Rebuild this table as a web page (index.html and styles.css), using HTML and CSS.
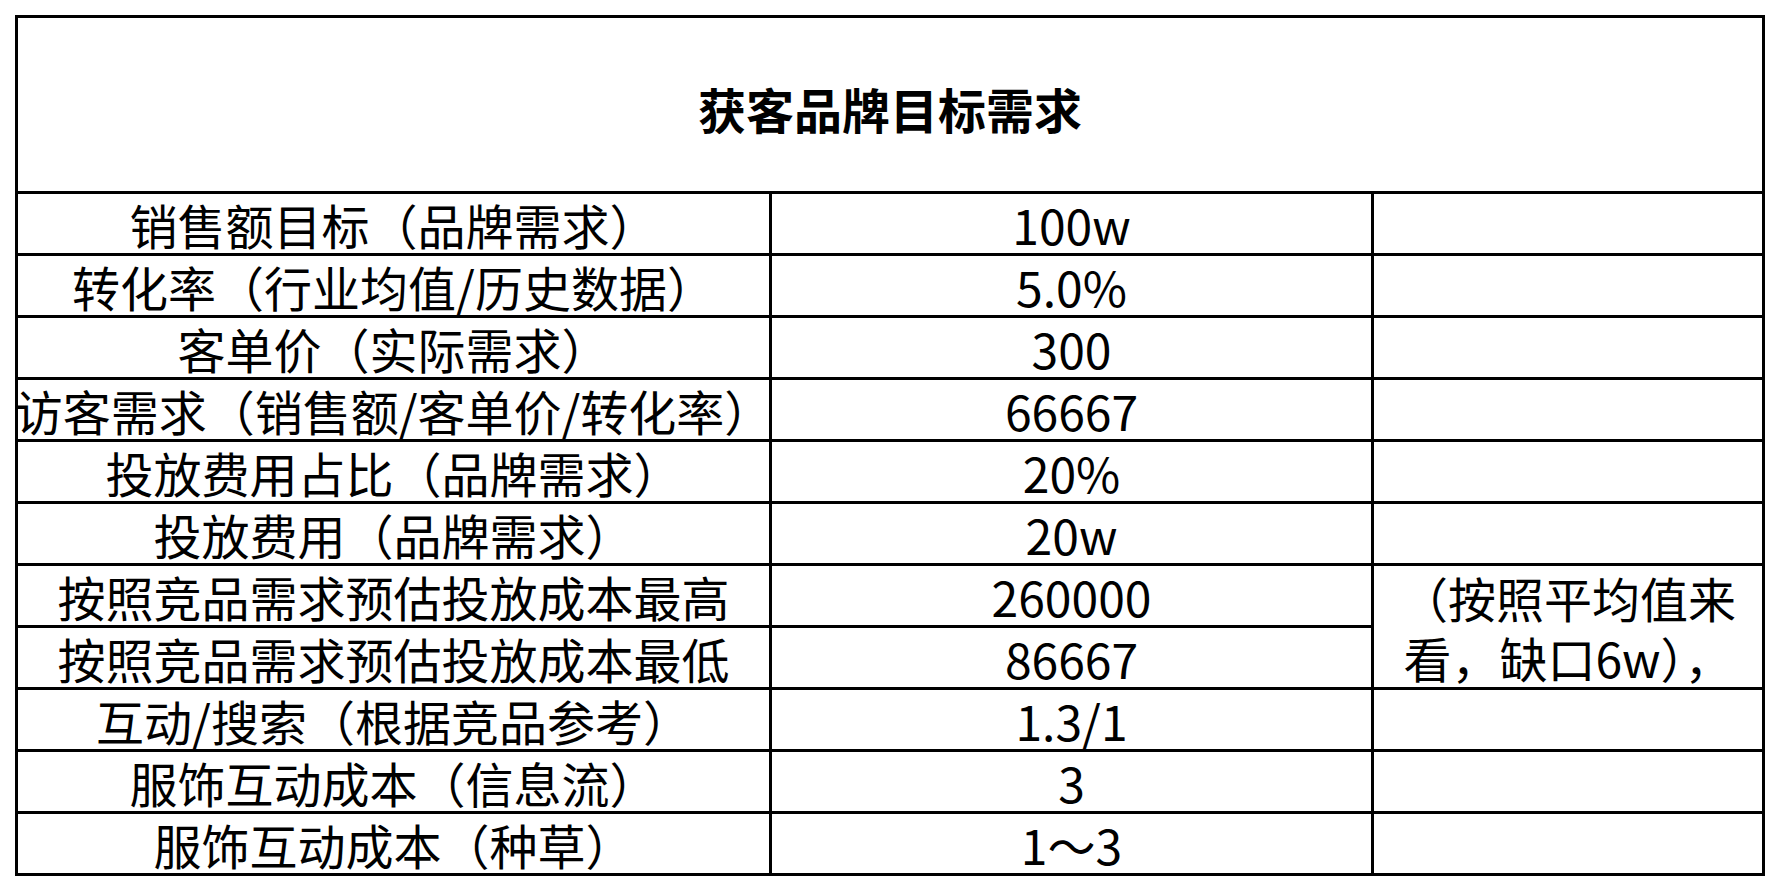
FILE: index.html
```html
<!DOCTYPE html>
<html lang="zh-CN">
<head>
<meta charset="utf-8">
<title>获客品牌目标需求</title>
<link rel="stylesheet" href="styles.css">
</head>
<body>
<div class="sheet">
  <div class="cell title">获客品牌目标需求</div>

  <div class="cell">销售额目标（品牌需求）</div>
  <div class="cell">100w</div>
  <div class="cell"></div>

  <div class="cell">转化率（行业均值/历史数据）</div>
  <div class="cell">5.0%</div>
  <div class="cell"></div>

  <div class="cell">客单价（实际需求）</div>
  <div class="cell">300</div>
  <div class="cell"></div>

  <div class="cell">访客需求（销售额/客单价/转化率）</div>
  <div class="cell">66667</div>
  <div class="cell"></div>

  <div class="cell">投放费用占比（品牌需求）</div>
  <div class="cell">20%</div>
  <div class="cell"></div>

  <div class="cell">投放费用（品牌需求）</div>
  <div class="cell">20w</div>
  <div class="cell"></div>

  <div class="cell">按照竞品需求预估投放成本最高</div>
  <div class="cell">260000</div>
  <div class="cell note">（按照平均值来看，缺口6w），</div>

  <div class="cell">按照竞品需求预估投放成本最低</div>
  <div class="cell">86667</div>

  <div class="cell">互动/搜索（根据竞品参考）</div>
  <div class="cell">1.3/1</div>
  <div class="cell"></div>

  <div class="cell">服饰互动成本（信息流）</div>
  <div class="cell">3</div>
  <div class="cell"></div>

  <div class="cell">服饰互动成本（种草）</div>
  <div class="cell">1～3</div>
  <div class="cell"></div>
</div>
</body>
</html>
```

FILE: styles.css
```css
html, body {
  margin: 0;
  padding: 0;
  background: #ffffff;
}

body {
  font-family: "Noto Sans CJK SC", "Noto Sans", sans-serif;
  color: #000000;
}

.sheet {
  display: grid;
  grid-template-columns: 751px 599px 388px;
  grid-template-rows: 173px repeat(11, 59px);
  gap: 3px;
  padding: 3px;
  background: #000000;
  width: max-content;
  margin: 15px 0 0 15px;
}

.cell {
  background: #ffffff;
  display: flex;
  align-items: center;
  justify-content: center;
  text-align: center;
  font-size: 48px;
  line-height: 1;
  white-space: nowrap;
}

.title {
  grid-column: 1 / -1;
  font-weight: bold;
  padding-top: 6px;
}

.note {
  grid-row: span 2;
  white-space: normal;
  line-height: 60px;
  padding: 0 6px;
}
```
